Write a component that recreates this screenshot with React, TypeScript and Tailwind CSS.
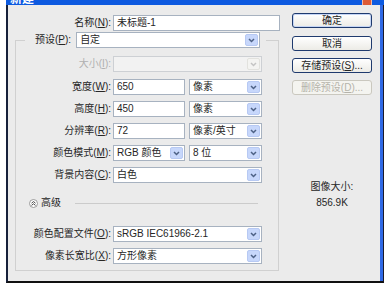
import React from "react";

const FONT = '"Liberation Sans", "Noto Sans CJK SC", sans-serif';

function Chevron({ disabled }: { disabled?: boolean }) {
  return (
    <svg width="7" height="5" viewBox="0 0 7 5">
      <path
        d="M1 1 L3.5 3.5 L6 1"
        fill="none"
        stroke={disabled ? "#c4c4c4" : "#4d6185"}
        strokeWidth="1.5"
      />
    </svg>
  );
}

function Select({ w, text, disabled }: { w: string; text?: string; disabled?: boolean }) {
  return (
    <div
      className={`${w} h-[16px] border flex items-center pl-[3px] pr-[1px] ${
        disabled ? "border-[#cdd0d4] bg-[#f2f2f2]" : "border-[#a7b2c0] bg-white"
      }`}
    >
      <span className="flex-1 whitespace-nowrap leading-[14px] text-[#262626]">{text}</span>
      <div
        className={`w-[13px] h-[12px] rounded-[2px] border flex items-center justify-center ${
          disabled ? "border-[#e2e2de] bg-[#f4f4f2]" : "border-[#b7c9f3] bg-[#c7d7fb]"
        }`}
      >
        <Chevron disabled={disabled} />
      </div>
    </div>
  );
}

function Input({ w, text }: { w: string; text: string }) {
  return (
    <div className={`${w} h-[16px] border border-[#a7b2c0] bg-white flex items-center pl-[3px]`}>
      <span className="leading-[14px] text-[#262626] whitespace-nowrap">{text}</span>
    </div>
  );
}

function Label({ children, disabled }: { children: React.ReactNode; disabled?: boolean }) {
  return (
    <div
      className={`w-[95px] text-right whitespace-nowrap leading-[14px] ${
        disabled ? "text-[#b0b0b0]" : "text-[#262626]"
      }`}
    >
      {children}
    </div>
  );
}

function Btn({ children, disabled, primary }: { children: React.ReactNode; disabled?: boolean; primary?: boolean }) {
  return (
    <div
      className={`w-[80px] h-[15px] rounded-[3px] border flex items-center justify-center leading-[13px] whitespace-nowrap ${
        disabled
          ? "border-[#cac8bf] bg-[#f4f4f0] text-[#b5b3aa]"
          : primary
          ? "border-[#1f3a6e] bg-gradient-to-b from-white to-[#ecebe6] text-[#262626] shadow-[inset_0_0_0_1px_#c5d5f5]"
          : "border-[#1f3a6e] bg-gradient-to-b from-white to-[#ecebe6] text-[#262626]"
      }`}
    >
      {children}
    </div>
  );
}

export default function App() {
  return (
    <div className="w-[391px] h-[291px] bg-white overflow-hidden text-[10px]" style={{ fontFamily: FONT }}>
      <div className="ml-[6px] w-[378px] h-[283px] flex flex-col">
        {/* title bar */}
        <div className="h-[5px] bg-[#0d5ae0] flex items-end overflow-hidden pl-[4px] pr-[12px]">
          <span className="text-white font-bold text-[12px] leading-[12px]">新建</span>
          <div className="ml-auto self-start w-[10px] h-[5px] bg-[#dc5a36] border-x border-[#f3b7a4]" />
        </div>
        {/* frame */}
        <div className="flex-1 flex border-l-[2px] border-l-[#17203a] border-r border-r-[#1a1a2a] border-b-[2px] border-b-[#111]">
          <div className="flex-1 flex bg-[#ebebeb] border-r-[3px] border-r-[#2f69e6]">
            {/* left column */}
            <div className="w-[273px] pl-[7px] pt-[10px] flex flex-col">
              <div className="flex items-center h-[16px]">
                <div className="w-[96px] text-right whitespace-nowrap leading-[14px] text-[#262626]">
                  名称(<u>N</u>):
                </div>
                <div className="ml-[2px]">
                  <Input w="w-[167px]" text="未标题-1" />
                </div>
              </div>
              <fieldset className="mt-[1px] w-[264px] border border-[#d0d0d0] pb-[6px]">
                <legend className="ml-[9px] pl-[10px] pr-[6px]">
                  <div className="flex items-center h-[16px]">
                    <span className="whitespace-nowrap leading-[14px] text-[#262626]">
                      预设(<u>P</u>):
                    </span>
                    <div className="ml-[5px]">
                      <Select w="w-[184px]" text="自定" />
                    </div>
                  </div>
                </legend>
                <div className="flex flex-col">
                  <div className="mt-[8px] flex items-center">
                    <Label disabled>
                      大小(<u>I</u>):
                    </Label>
                    <div className="ml-[2px]">
                      <Select w="w-[149px]" disabled />
                    </div>
                  </div>
                  <div className="mt-[7px] flex items-center">
                    <Label>
                      宽度(<u>W</u>):
                    </Label>
                    <div className="ml-[2px] flex gap-[4px]">
                      <Input w="w-[72px]" text="650" />
                      <Select w="w-[73px]" text="像素" />
                    </div>
                  </div>
                  <div className="mt-[6px] flex items-center">
                    <Label>
                      高度(<u>H</u>):
                    </Label>
                    <div className="ml-[2px] flex gap-[4px]">
                      <Input w="w-[72px]" text="450" />
                      <Select w="w-[73px]" text="像素" />
                    </div>
                  </div>
                  <div className="mt-[6px] flex items-center">
                    <Label>
                      分辨率(<u>R</u>):
                    </Label>
                    <div className="ml-[2px] flex gap-[4px]">
                      <Input w="w-[72px]" text="72" />
                      <Select w="w-[73px]" text="像素/英寸" />
                    </div>
                  </div>
                  <div className="mt-[6px] flex items-center">
                    <Label>
                      颜色模式(<u>M</u>):
                    </Label>
                    <div className="ml-[2px] flex gap-[4px]">
                      <Select w="w-[72px]" text="RGB 颜色" />
                      <Select w="w-[73px]" text="8 位" />
                    </div>
                  </div>
                  <div className="mt-[6px] flex items-center">
                    <Label>
                      背景内容(<u>C</u>):
                    </Label>
                    <div className="ml-[2px]">
                      <Select w="w-[149px]" text="白色" />
                    </div>
                  </div>
                  {/* advanced */}
                  <div className="mt-[13px] h-[14px] flex items-center pl-[13px]">
                    <div className="w-[9px] h-[9px] rounded-full border border-[#9a9a9a] bg-white flex items-center justify-center">
                      <svg width="5" height="5" viewBox="0 0 5 5">
                        <path d="M0.5 2.2 L2.5 0.6 L4.5 2.2 M0.5 4.4 L2.5 2.8 L4.5 4.4" fill="none" stroke="#333" strokeWidth="0.9" />
                      </svg>
                    </div>
                    <span className="ml-[3px] leading-[14px] text-[#262626]">高级</span>
                    <div className="ml-[14px] w-[183px] h-px bg-[#cbcbcb]" />
                  </div>
                  <div className="mt-[16px] flex items-center">
                    <Label>
                      颜色配置文件(<u>O</u>):
                    </Label>
                    <div className="ml-[2px]">
                      <Select w="w-[149px]" text="sRGB IEC61966-2.1" />
                    </div>
                  </div>
                  <div className="mt-[6px] flex items-center">
                    <Label>
                      像素长宽比(<u>X</u>):
                    </Label>
                    <div className="ml-[2px]">
                      <Select w="w-[149px]" text="方形像素" />
                    </div>
                  </div>
                </div>
              </fieldset>
            </div>
            {/* right column */}
            <div className="ml-[11px] w-[80px] pt-[8px] flex flex-col">
              <Btn primary>确定</Btn>
              <div className="mt-[8px]">
                <Btn>取消</Btn>
              </div>
              <div className="mt-[7px]">
                <Btn>
                  存储预设(<u>S</u>)...
                </Btn>
              </div>
              <div className="mt-[7px]">
                <Btn disabled>
                  删除预设(<u>D</u>)...
                </Btn>
              </div>
              <div className="mt-[86px] text-center leading-[12px] text-[#262626]">图像大小:</div>
              <div className="mt-[4px] text-center leading-[12px] text-[#262626]">856.9K</div>
            </div>
          </div>
        </div>
      </div>
    </div>
  );
}
